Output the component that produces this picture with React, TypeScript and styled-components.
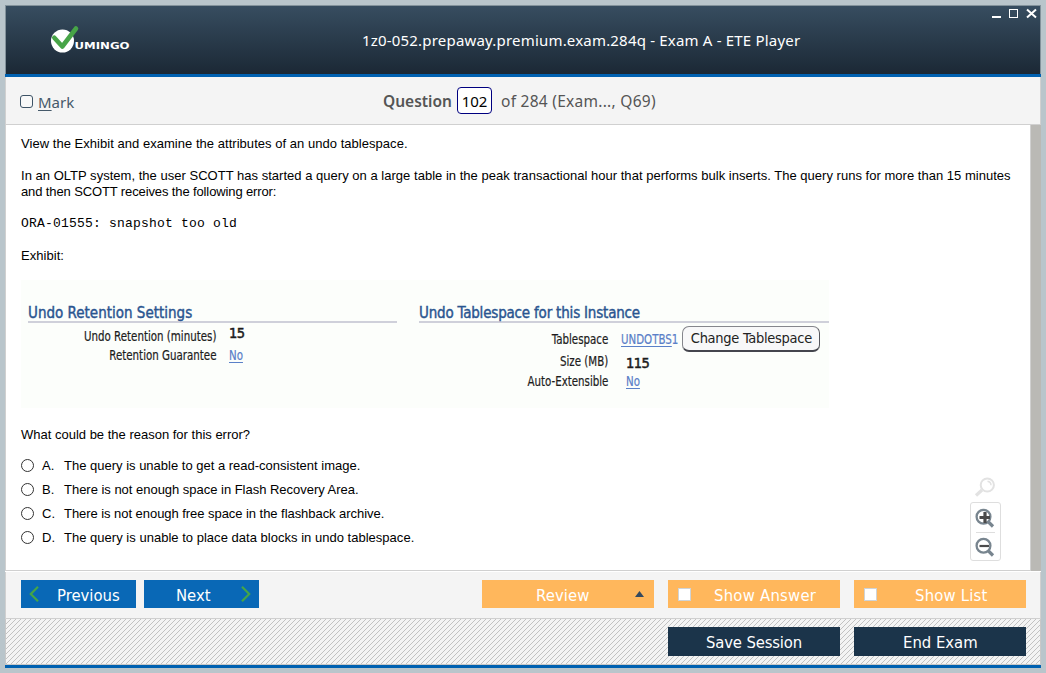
import React from "react";
import styled, { createGlobalStyle } from "styled-components";

const Global = createGlobalStyle`
  *, *::before, *::after { box-sizing: border-box; }
  html, body { margin: 0; padding: 0; height: 100%; overflow: hidden; }
  body { background: #b9c5cb; font-family: "Liberation Sans", Arial, sans-serif; }
`;

const ui = `"Noto Sans", "Segoe UI", sans-serif`;
const tahoma = `"DejaVu Sans Condensed", "DejaVu Sans", Tahoma, sans-serif`;

const Desktop = styled.div`
  width: 1046px;
  height: 673px;
  padding: 5px;
  background: #b9c5cb;
`;

const Window = styled.div`
  display: flex;
  flex-direction: column;
  width: 1036px;
  height: 663px;
`;

const Header = styled.header`
  position: relative;
  display: flex;
  align-items: center;
  flex: 0 0 69px;
  padding-left: 45px;
  border: 1px solid #83929b;
  border-bottom: 0;
  background: linear-gradient(#374d60, #1b2835);
`;

const BlueBar = styled.div`
  flex: 0 0 3px;
  background: #0061b1;
`;

const Logo = styled.svg`
  display: block;
  width: 82px;
  height: 30px;
  margin-top: -2px;
`;

const Title = styled.h1`
  margin: 0 0 0 229px;
  padding-bottom: 1px;
  font: 400 15px/20px ${ui};
  letter-spacing: 0.19px;
  color: #fff;
  white-space: nowrap;
`;

const WindowControls = styled.svg`
  position: absolute;
  top: 2px;
  right: 2px;
  width: 48px;
  height: 14px;
`;

const Toolbar = styled.div`
  display: flex;
  align-items: center;
  flex: 0 0 48px;
  padding-left: 14px;
  background: #f4f4f4;
  border: 1px solid #d0d0d0;
  border-top: 0;
  font: 400 16px/22px ${ui};
  color: #4e5459;
`;

const MarkBox = styled.span`
  width: 13px;
  height: 13px;
  margin-top: 2px;
  border: 1px solid #3d5366;
  border-radius: 3px;
  background: #f8f8f8;
`;

const MarkLabel = styled.span`
  width: 345px;
  margin-left: 5px;
  padding-top: 3px;
  font-size: 15px;
  color: #45596a;

  u { text-underline-offset: 2px; }
`;

const QuestionLabel = styled.span`
  width: 74px;
  font-size: 15.5px;
  font-weight: 600;
  color: #555;
  white-space: nowrap;
`;

const QuestionNumber = styled.span`
  display: flex;
  align-items: center;
  justify-content: center;
  width: 35px;
  height: 27px;
  border: 1px solid #000080;
  border-radius: 4px;
  background: #fff;
  color: #000;
  font-size: 15px;
`;

const QuestionTotal = styled.span`
  margin-left: 9px;
  font-size: 15.5px;
  letter-spacing: 0.27px;
  color: #555;
  white-space: nowrap;
`;

const Body = styled.main`
  display: flex;
  flex: 0 0 447px;
  background: #fff;
`;

const Content = styled.section`
  position: relative;
  flex: 1;
  padding: 11px 0 0 15px;
  border: 1px solid #d0d0d0;
  border-top: 0;
  margin-bottom: 1px;
`;

const Scrollbar = styled.div`
  flex: 0 0 10px;
  margin-bottom: 1px;
  background: #bab9b5;
`;

const Line = styled.p<{ $spacing?: number; $gap?: number }>`
  margin: 0 0 ${(p) => p.$gap ?? 0}px;
  font-size: 13px;
  line-height: 16px;
  letter-spacing: ${(p) => p.$spacing ?? 0}px;
  color: #000;
  white-space: nowrap;
`;

const Code = styled(Line)`
  font-family: "Liberation Mono", "Courier New", monospace;
`;

const Exhibit = styled.div`
  display: flex;
  align-items: flex-start;
  gap: 22px;
  width: 808px;
  height: 128px;
  margin: 16px 0 19px;
  padding: 22px 0 0 7px;
  background: #fcfefb;
  font-family: ${tahoma};
`;

const Panel = styled.div<{ $width: number }>`
  width: ${(p) => p.$width}px;
`;

const PanelTitle = styled.h2<{ $spacing: number }>`
  height: 21px;
  margin: 0;
  border-bottom: 2px solid #cfd0da;
  font-size: 15px;
  font-weight: 400;
  line-height: 22px;
  letter-spacing: ${(p) => p.$spacing}px;
  color: #2a5590;
  -webkit-text-stroke: 0.4px #2a5590;
  white-space: nowrap;
`;

const PanelBody = styled.div<{ $labels: number; $gap: number }>`
  display: grid;
  grid-template-columns: ${(p) => p.$labels}px max-content;
  column-gap: ${(p) => p.$gap}px;
`;

const Column = styled.div<{ $top: number; $right?: boolean }>`
  display: flex;
  flex-direction: column;
  align-items: ${(p) => (p.$right ? "flex-end" : "flex-start")};
  padding-top: ${(p) => p.$top}px;
`;

const Cell = styled.span<{ $h?: number; $indent?: number; $link?: boolean; $strong?: boolean }>`
  display: flex;
  align-items: center;
  height: ${(p) => p.$h ?? 19}px;
  margin-left: ${(p) => p.$indent ?? 0}px;
  font-size: ${(p) => (p.$strong ? 14.5 : 13.5)}px;
  letter-spacing: ${(p) => (p.$strong ? -0.6 : 0)}px;
  color: ${(p) => (p.$link ? "#5a80c8" : "#1c1c1c")};
  white-space: nowrap;
  ${(p) => p.$strong && "-webkit-text-stroke: 0.5px #1c1c1c;"}

  u { text-underline-offset: 2px; }
`;

const Narrow = styled.span<{ $right?: boolean }>`
  display: inline-block;
  font-size: 14px;
  -webkit-text-stroke: 0.2px currentColor;
  transform: scaleX(0.815);
  transform-origin: ${(p) => (p.$right ? "right" : "left")} center;
`;

const ChangeButton = styled.button`
  width: 138px;
  height: 26px;
  margin-left: -9px;
  padding: 0 0 1px;
  border: 1px solid #85868c;
  border-bottom: 2px solid #44454d;
  border-right-color: #55565d;
  border-radius: 7px;
  background: #f8f8f9;
  font: 400 14.5px/20px ${tahoma};
  letter-spacing: -0.28px;
  color: #222;
  white-space: nowrap;
`;

const Options = styled.ul`
  margin: 11px 0 0;
  padding: 0;
  list-style: none;
`;

const Option = styled.li`
  display: flex;
  align-items: center;
  height: 24px;
  font-size: 13px;
  line-height: 16px;
  color: #000;
  white-space: nowrap;
`;

const Radio = styled.span`
  width: 13px;
  height: 13px;
  margin: 0 8px 1px 0;
  border: 1px solid #333;
  border-radius: 50%;
  background: #fff;
`;

const Letter = styled.span`
  width: 22px;
`;

const OptionText = styled.span<{ $spacing: number }>`
  letter-spacing: ${(p) => p.$spacing}px;
`;

const ZoomTools = styled.div`
  position: absolute;
  right: 29px;
  bottom: 9px;
  display: flex;
  flex-direction: column;
  align-items: center;
  width: 32px;
  gap: 5px;

  svg { display: block; }
`;

const ZoomPanel = styled.div`
  display: flex;
  flex-direction: column;
  align-items: center;
  justify-content: space-between;
  width: 31px;
  height: 59px;
  padding: 5px 4px 3px;
  border: 1px solid #dedede;
  border-radius: 3px;
  background: #fff;
`;

const ZoomRule = styled.div`
  width: 19px;
  height: 1px;
  background: #dedede;
`;

const NavBar = styled.div`
  display: flex;
  flex: 0 0 47px;
  align-items: flex-start;
  padding: 8px 0 0 15px;
  border: 1px solid #d0d0d0;
  border-top: 0;
  background: #f4f4f4;
`;

const NavButton = styled.button`
  display: flex;
  align-items: center;
  width: 115px;
  height: 28px;
  margin-right: 8px;
  padding: 0 8px;
  border: 0;
  background: #0968b6;
  color: #fff;
  font: 400 16.5px/20px ${tahoma};
`;

const NavText = styled.span<{ $spacing: number; $left: number }>`
  padding-top: 3px;
  margin-left: ${(p) => p.$left}px;
  margin-right: auto;
  letter-spacing: ${(p) => p.$spacing}px;
`;

const Action = styled.button<{ $dark?: boolean; $first?: boolean }>`
  display: flex;
  align-items: center;
  width: 172px;
  height: ${(p) => (p.$dark ? 29 : 28)}px;
  margin-left: ${(p) => (p.$first ? "auto" : "14px")};
  padding: 0 10px;
  border: 0;
  background: ${(p) => (p.$dark ? "#1b344a" : "#ffb75c")};
  color: #fff;
  font: 400 16.5px/20px ${tahoma};
  white-space: nowrap;

  svg { display: block; }
`;

const ActionGroup = styled.div`
  display: flex;
  flex: 1;
  padding-right: 14px;
`;

const CheckSquare = styled.span`
  width: 13px;
  height: 13px;
  border: 1px solid #cfd3d6;
  background: #fff;
`;

const StripedBar = styled.div`
  display: flex;
  flex: 0 0 46px;
  align-items: flex-start;
  padding-top: 8px;
  border: 1px solid #c8c8c8;
  border-top: 0;
  background: linear-gradient(135deg, #f4f4f4 46%, #c2c2c2 46%, #c2c2c2 54%, #f4f4f4 54%) 0 0 / 5px 5px;
`;

const options = [
  { letter: "A.", text: "The query is unable to get a read-consistent image.", spacing: 0 },
  { letter: "B.", text: "There is not enough space in Flash Recovery Area.", spacing: -0.02 },
  { letter: "C.", text: "There is not enough free space in the flashback archive.", spacing: -0.05 },
  { letter: "D.", text: "The query is unable to place data blocks in undo tablespace.", spacing: 0.02 },
];

function VumingoLogo() {
  return (
    <Logo viewBox="0 0 82 30">
      <circle cx="11.5" cy="17" r="11.5" fill="#fff" />
      <path d="M3.3 13.7 L11.3 22.5 L25 4.5" fill="none" stroke="#47a447" strokeWidth="4.6" strokeLinecap="round" strokeLinejoin="round" />
      <text x="23.5" y="25" fontFamily="DejaVu Sans" fontWeight="700" fontSize="9.5" textLength="55" lengthAdjust="spacingAndGlyphs" fill="#fff">UMINGO</text>
    </Logo>
  );
}

function Magnifier({ sign }: { sign?: "plus" | "minus" }) {
  return (
    <svg width="20" height="20" viewBox="0 0 20 20" fill="none">
      <path d="M13 13.5 L18 18.5" stroke="#78858f" strokeWidth="3.2" />
      <circle cx="8.5" cy="8.8" r="6.9" stroke="#78858f" strokeWidth="2.3" fill="#fff" />
      <path d={sign === "plus" ? "M4.5 9.5H15M10 4V15" : "M4.5 9H14"} stroke="#4a4a4a" strokeWidth={sign === "plus" ? 3.2 : 2.2} />
    </svg>
  );
}

export default function App() {
  return (
    <Desktop>
      <Global />
      <Window>
        <Header>
          <VumingoLogo />
          <Title>1z0-052.prepaway.premium.exam.284q - Exam A - ETE Player</Title>
          <WindowControls viewBox="0 0 48 14">
            <path d="M2 9H11" stroke="#fff" strokeWidth="2" />
            <rect x="19.5" y="1.5" width="8" height="8" fill="none" stroke="#fff" />
            <path d="M37 1.5L46 9.5M46 1.5L37 9.5" stroke="#fff" strokeWidth="2" />
          </WindowControls>
        </Header>
        <BlueBar />
        <Toolbar>
          <MarkBox />
          <MarkLabel><u>M</u>ark</MarkLabel>
          <QuestionLabel>Question</QuestionLabel>
          <QuestionNumber>102</QuestionNumber>
          <QuestionTotal>of 284 (Exam..., Q69)</QuestionTotal>
        </Toolbar>
        <Body>
          <Content>
            <Line $gap={16} $spacing={0.035}>View the Exhibit and examine the attributes of an undo tablespace.</Line>
            <Line $spacing={0.021}>In an OLTP system, the user SCOTT has started a query on a large table in the peak transactional hour that performs bulk inserts. The query runs for more than 15 minutes</Line>
            <Line $gap={16} $spacing={-0.12}>and then SCOTT receives the following error:</Line>
            <Code $gap={16} $spacing={0.2}>ORA-01555: snapshot too old</Code>
            <Line $spacing={0.05}>Exhibit:</Line>
            <Exhibit>
              <Panel $width={369}>
                <PanelTitle $spacing={0}>Undo Retention Settings</PanelTitle>
                <PanelBody $labels={188} $gap={13}>
                  <Column $top={3} $right>
                    <Cell><Narrow $right>Undo Retention (minutes)</Narrow></Cell>
                    <Cell><Narrow $right>Retention Guarantee</Narrow></Cell>
                  </Column>
                  <Column $top={0}>
                    <Cell $h={20} $strong>15</Cell>
                    <Cell $h={23} $link><Narrow><u>No</u></Narrow></Cell>
                  </Column>
                </PanelBody>
              </Panel>
              <Panel $width={410}>
                <PanelTitle $spacing={-0.19}>Undo Tablespace for this Instance</PanelTitle>
                <PanelBody $labels={189} $gap={13}>
                  <Column $top={5} $right>
                    <Cell $h={21}><Narrow $right>Tablespace</Narrow></Cell>
                    <Cell $h={24}><Narrow $right>Size (MB)</Narrow></Cell>
                    <Cell $h={15}><Narrow $right>Auto-Extensible</Narrow></Cell>
                  </Column>
                  <Column $top={3}>
                    <Cell $h={26} $link><Narrow><u>UNDOTBS</u>1</Narrow><ChangeButton>Change Tablespace</ChangeButton></Cell>
                    <Cell $h={21} $indent={5} $strong>115</Cell>
                    <Cell $h={16} $indent={5} $link><Narrow><u>No</u></Narrow></Cell>
                  </Column>
                </PanelBody>
              </Panel>
            </Exhibit>
            <Line>What could be the reason for this error?</Line>
            <Options>
              {options.map((o) => (
                <Option key={o.letter}>
                  <Radio />
                  <Letter>{o.letter}</Letter>
                  <OptionText $spacing={o.spacing}>{o.text}</OptionText>
                </Option>
              ))}
            </Options>
            <ZoomTools>
              <svg width="22" height="20" viewBox="0 0 22 20" fill="none" stroke="#e2e2e2">
                <path d="M8 13 L2 18.5" strokeWidth="3.2" />
                <circle cx="13.3" cy="8" r="6.6" strokeWidth="2" />
                <path d="M13.5 4.3 Q17 5 17 8.3" strokeWidth="1.5" />
              </svg>
              <ZoomPanel>
                <Magnifier sign="plus" />
                <ZoomRule />
                <Magnifier sign="minus" />
              </ZoomPanel>
            </ZoomTools>
          </Content>
          <Scrollbar />
        </Body>
        <NavBar>
          <NavButton>
            <svg width="10" height="16" viewBox="0 0 10 16" fill="none" stroke="#45a548" strokeWidth="2.2"><path d="M9 0.8L1.8 8L9 15.2" /></svg>
            <NavText $left={18} $spacing={0}>Previous</NavText>
          </NavButton>
          <NavButton>
            <NavText $left={24} $spacing={0}>Next</NavText>
            <svg width="10" height="16" viewBox="0 0 10 16" fill="none" stroke="#45a548" strokeWidth="2.2"><path d="M1 0.8L8.2 8L1 15.2" /></svg>
          </NavButton>
          <ActionGroup>
            <Action $first>
              <NavText $left={44} $spacing={0.1}>Review</NavText>
              <svg width="9" height="6" viewBox="0 0 9 6"><path d="M0 6L4.5 0L9 6Z" fill="#34495e" /></svg>
            </Action>
            <Action>
              <CheckSquare />
              <NavText $left={23} $spacing={0.25}>Show Answer</NavText>
            </Action>
            <Action>
              <CheckSquare />
              <NavText $left={38} $spacing={0.2}>Show List</NavText>
            </Action>
          </ActionGroup>
        </NavBar>
        <StripedBar>
          <ActionGroup>
            <Action $dark $first>
              <NavText $left={28} $spacing={-0.15}>Save Session</NavText>
            </Action>
            <Action $dark>
              <NavText $left={39} $spacing={0}>End Exam</NavText>
            </Action>
          </ActionGroup>
        </StripedBar>
        <BlueBar />
      </Window>
    </Desktop>
  );
}
